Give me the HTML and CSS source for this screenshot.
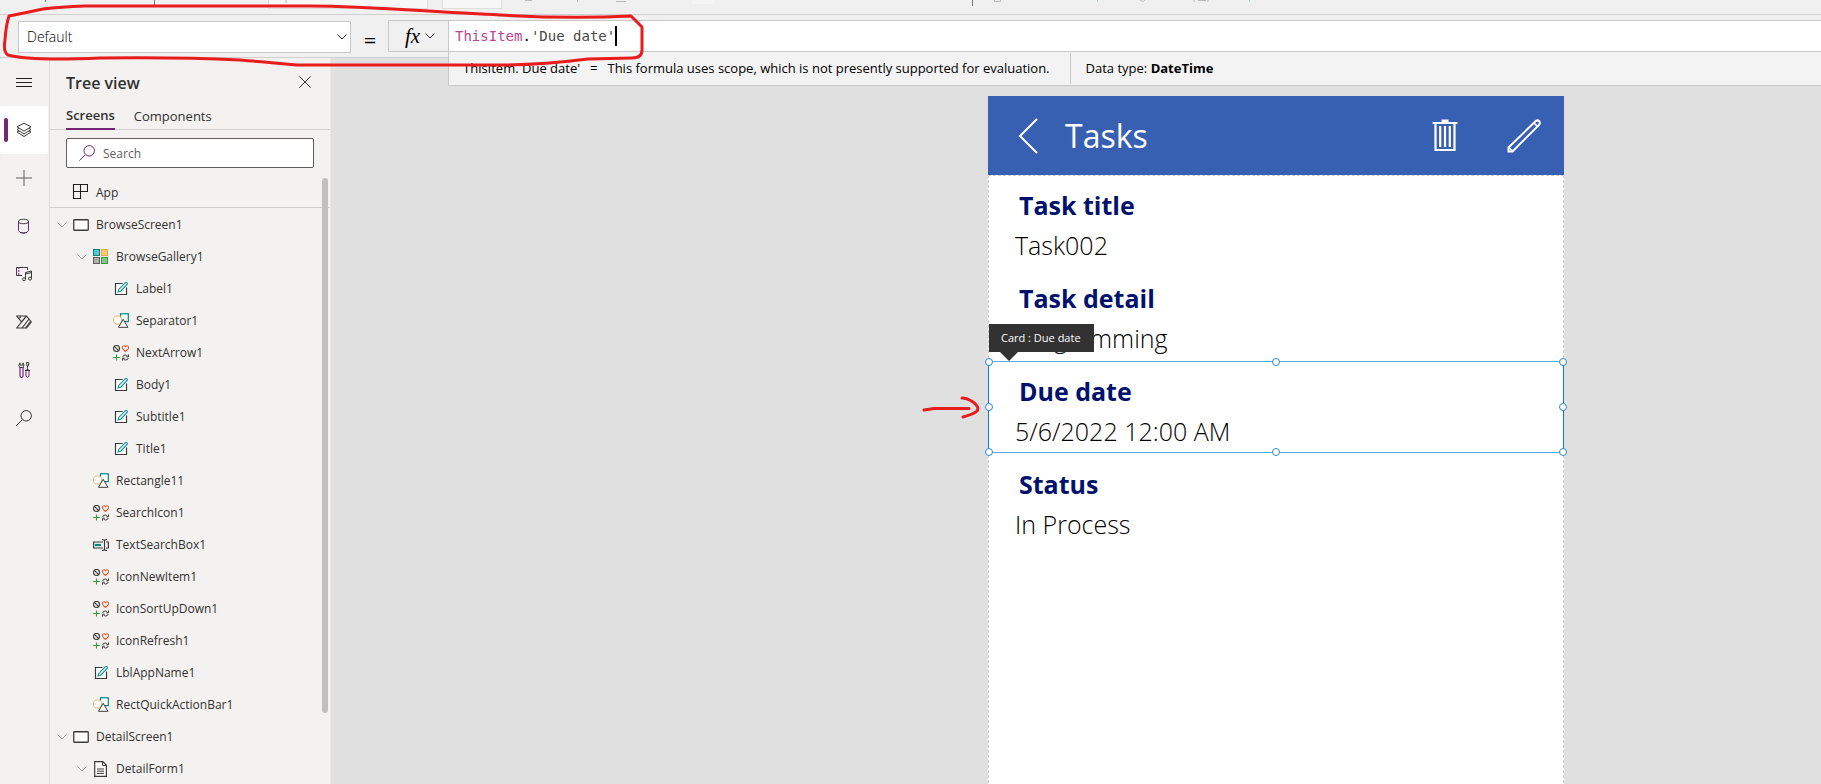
FILE: index.html
```html
<!DOCTYPE html>
<html lang="en">
<head>
<meta charset="utf-8">
<meta name="viewport" content="width=device-width, initial-scale=1">
<title>Tasks - App studio</title>
<link rel="stylesheet" href="styles.css">
</head>
<body>
<svg class="defs" width="0" height="0" aria-hidden="true">
  <defs>
    <symbol id="i-chev" viewBox="0 0 10 6"><path d="M.5 .5L5 5L9.500 .5" fill="none" stroke="currentColor"/></symbol>
    <symbol id="i-screen" viewBox="0 0 16 16"><rect x=".75" y="2.750" width="14.500" height="10.500" rx=".8" fill="#fff" stroke="#3b3a39" stroke-width="1.300"/></symbol>
    <symbol id="i-gallery" viewBox="0 0 16 16">
      <rect x=".5" y=".5" width="6" height="6" fill="#5cc5c5" stroke="#038387"/><rect x="8.500" y=".5" width="6" height="6" fill="#ffc978" stroke="#f2a93b"/>
      <rect x=".5" y="8.500" width="6" height="6" fill="#b1b0af" stroke="#5f5e5c"/><rect x="8.500" y="8.500" width="6" height="6" fill="#87c38a" stroke="#359b3a"/>
    </symbol>
    <symbol id="i-label" viewBox="0 0 16 16">
      <path d="M9.500 2.500H2.500V13.500H13.500V6.500" fill="#fff" stroke="#3b3a39" stroke-width="1.200"/>
      <path d="M5 11L5.800 8.200L12.400 1.600Q13.300 1 14.100 1.800Q14.800 2.700 14.200 3.500L7.700 10.200Z" fill="#d5eeee" stroke="#1e9799" stroke-width="1.100"/>
    </symbol>
    <symbol id="i-shape" viewBox="0 0 16 16">
      <rect x="7.500" y=".8" width="7.800" height="7.800" fill="#fff" stroke="#038387" stroke-width="1.200"/>
      <circle cx="4.600" cy="7" r="4.100" fill="#fff" stroke="#f4b85e"/>
      <path d="M10.200 6.300L14.900 14.300H5.500Z" fill="#fff" stroke="#3b3a39"/>
    </symbol>
    <symbol id="i-icons" viewBox="0 0 16 16" fill="none">
      <circle cx="3.500" cy="3.500" r="3" stroke="#3b3a39" stroke-width="1.100"/><path d="M1.400 1.400L5.600 5.600" stroke="#3b3a39" stroke-width="1.100"/>
      <path d="M12.500 6.500L9.800 3.800Q8.800 2.200 10 1.100Q11.500 .2 12.500 1.700Q13.500 .2 15 1.100Q16.200 2.200 15.200 3.800Z" stroke="#e8593a" stroke-width="1.100"/>
      <path d="M3.500 9.500V15.500M.2 12.500H6.800" stroke="#359b3a" stroke-width="1.200"/>
      <path d="M9.800 12Q10 10 12.300 10Q14 10 14.800 11.500M15.500 9.500V11.800H13.200M15.200 13Q14.900 15 12.700 15Q11 15 10.200 13.500M9.500 15.500V13.200H11.800" stroke="#3b3a39"/>
    </symbol>
    <symbol id="i-input" viewBox="0 0 16 16" fill="none">
      <path d="M10 5H.6V11H10M13 5H15.400V11H13" stroke="#3b3a39" stroke-width="1.200"/><path d="M2 8H8" stroke="#038387" stroke-width="2.200"/>
      <path d="M9 2.500Q11.500 2.500 11.500 4V12Q11.500 13.500 9 13.500M14 2.500Q11.500 2.500 11.500 4M14 13.500Q11.500 13.500 11.500 12" stroke="#3b3a39" stroke-width="1.100"/>
    </symbol>
    <symbol id="i-form" viewBox="0 0 16 16">
      <path d="M1.700 .6H9.800L13.400 4.200V15.400H1.700Z" fill="#fff" stroke="#3b3a39" stroke-width="1.200"/><path d="M9.500 .8V4.500H13.200M4 8H11M4 10.200H11M4 12.400H11" fill="none" stroke="#3b3a39"/>
    </symbol>
    <symbol id="i-app" viewBox="0 0 16 16"><path d="M1.500 .5H15.500V7.500H1.500ZM1.500 7.500V14.500H8.500V.5" fill="none" stroke="#201f1e" stroke-width="1.100"/></symbol>
    <symbol id="i-search" viewBox="0 0 16 16"><circle cx="10.200" cy="5.800" r="5.200" fill="none" stroke="currentColor"/><path d="M6.500 9.500L.4 15.600" stroke="currentColor"/></symbol>
  </defs>
</svg>

<div class="studio">
  <div class="ribbon" aria-hidden="true">
    <svg width="1300" height="14" viewBox="0 0 1300 14">
      <path d="M45.500 0V2" stroke="#359b4a"/><path d="M154.500 0V5M972.500 0V6" stroke="#777"/>
      <rect x="268.500" y="-4" width="159" height="12.500" fill="#f7f7f7" stroke="#ddd"/><rect x="442.500" y="-4" width="59" height="12.500" fill="#f7f7f7" stroke="#ddd"/>
      <rect x="692" y="0" width="22" height="4" fill="#f5f5f5"/>
      <path d="M286 0V3M525 .5H532M577.500 0V2M616 1.500H626M994.500 0V1.500H1000.500V0M1140 0Q1143 3 1145 0M1194 0V2M1198 .5H1206M1208 0V2" fill="none" stroke="#b8b8b8"/>
      <path d="M1097.500 0V2M1249.500 0V2" stroke="#b5d8cc"/>
    </svg>
  </div>

  <header class="formula-bar">
    <div class="property">
      <select class="property-select" aria-label="Property"><option>Default</option></select>
      <svg class="property-chev" width="10" height="6"><use href="#i-chev"/></svg>
    </div>
    <span class="equals">=</span>
    <button class="fx" type="button" aria-label="Insert function"><span class="fx-text">fx</span><svg width="10" height="6"><use href="#i-chev"/></svg></button>
    <div class="formula">
      <div class="formula-input" role="textbox" contenteditable="true" spellcheck="false" aria-label="Formula"><span class="token">ThisItem</span>.<span class="name">'Due date'</span><span class="caret"></span></div>
      <div class="result">
        <div class="result-text"><span>ThisItem. Due date'</span><span>=</span><span>This formula uses scope, which is not presently supported for evaluation.</span></div>
        <div class="result-type">Data type: <b>DateTime</b></div>
      </div>
    </div>
  </header>

  <div class="workspace">
    <nav class="rail" aria-label="Authoring">
      <button type="button" aria-label="Menu"><svg width="16" height="16" viewBox="0 0 16 16"><path d="M0 4.500H16M0 8.500H16M0 12.500H16" stroke="#201f1e"/></svg></button>
      <button type="button" class="active" aria-label="Tree view"><svg width="16" height="16" viewBox="0 0 16 16" fill="#fff" stroke="#3b3a39"><path d="M1 10L8 6.500L15 10L8 14.500Z"/><path d="M1 7.500L8 4L15 7.500L8 12Z"/><path d="M1 4.800L8 1.300L15 4.800L8 9.200Z"/></svg></button>
      <button type="button" aria-label="Insert"><svg width="16" height="16" viewBox="0 0 16 16"><path d="M0 8H16M8 0V16" stroke="#605e5c"/></svg></button>
      <button type="button" aria-label="Data"><svg width="16" height="16" viewBox="0 0 16 16" fill="none"><path d="M2.500 3.500V12.500Q3 15 7.500 15Q12 15 12.500 12.500V3.500" stroke="#742774"/><ellipse cx="7.500" cy="3.500" rx="5" ry="2.200" stroke="#3b3a39"/><path d="M4 14.500Q7.500 15.600 11 14.500" stroke="#3b3a39"/></svg></button>
      <button type="button" aria-label="Media"><svg width="16" height="16" viewBox="0 0 16 16" fill="none" stroke="#3b3a39"><path d="M6 9.500H.5V1.500H11.500V4"/><path d="M.5 1V10M2.800 1V10" stroke="#742774" stroke-dasharray="2 1"/><path d="M9.500 13V6.500L15.500 5V12.500M9.500 8L15.500 6.500"/><circle cx="8" cy="13.300" r="1.500"/><circle cx="14" cy="12.600" r="1.500"/></svg></button>
      <button type="button" aria-label="Power Automate"><svg width="16" height="16" viewBox="0 0 16 16" fill="none" stroke="#3b3a39" stroke-width="1.200"><path d="M.7 2H10.500L15.300 8L10.500 14H.7L5.500 8Z"/><path d="M5.500 8L10.500 2M6 14L13 5M9.500 14L14.700 7.300M3.500 4.500L5 2"/></svg></button>
      <button type="button" aria-label="Advanced tools"><svg width="16" height="16" viewBox="0 0 16 16" fill="none"><path d="M4 5V14Q5.500 17 7 14V5" stroke="#742774" stroke-width="1.200"/><path d="M4 .8Q1.500 4 4 5.500H7Q9 3 7 .8V3H4Z" stroke="#3b3a39"/><path d="M11.500 4V8M10 8H13V14Q11.500 17 10 14V8" stroke="#742774"/><path d="M10.500 .6H12.900L12.300 4H11ZM9 8.500H14" stroke="#3b3a39"/></svg></button>
      <button type="button" aria-label="Search"><svg class="rail-search" width="16" height="16"><use href="#i-search"/></svg></button>
    </nav>

    <aside class="tree">
      <div class="tree-head">
        <h1>Tree view</h1>
        <button type="button" aria-label="Close"><svg width="12" height="12" viewBox="0 0 12 12"><path d="M.3 .3L11.700 11.700M11.700 .3L.3 11.700" stroke="#323130"/></svg></button>
      </div>
      <div class="tabs" role="tablist">
        <button type="button" role="tab" aria-selected="true" class="tab selected">Screens</button>
        <button type="button" role="tab" aria-selected="false" class="tab">Components</button>
      </div>
      <label class="search"><svg width="16" height="16"><use href="#i-search"/></svg><input type="search" placeholder="Search" aria-label="Search"></label>
      <div class="tree-app"><svg width="16" height="16"><use href="#i-app"/></svg><span>App</span></div>
      <ul class="tree-list">
        <li class="l1"><svg class="chev" width="10" height="6"><use href="#i-chev"/></svg><svg width="16" height="16"><use href="#i-screen"/></svg><span>BrowseScreen1</span></li>
        <li class="l2"><svg class="chev" width="10" height="6"><use href="#i-chev"/></svg><svg width="16" height="16"><use href="#i-gallery"/></svg><span>BrowseGallery1</span></li>
        <li class="l3"><svg width="16" height="16"><use href="#i-label"/></svg><span>Label1</span></li>
        <li class="l3"><svg width="16" height="16"><use href="#i-shape"/></svg><span>Separator1</span></li>
        <li class="l3"><svg width="16" height="16"><use href="#i-icons"/></svg><span>NextArrow1</span></li>
        <li class="l3"><svg width="16" height="16"><use href="#i-label"/></svg><span>Body1</span></li>
        <li class="l3"><svg width="16" height="16"><use href="#i-label"/></svg><span>Subtitle1</span></li>
        <li class="l3"><svg width="16" height="16"><use href="#i-label"/></svg><span>Title1</span></li>
        <li class="l2 leaf"><svg width="16" height="16"><use href="#i-shape"/></svg><span>Rectangle11</span></li>
        <li class="l2 leaf"><svg width="16" height="16"><use href="#i-icons"/></svg><span>SearchIcon1</span></li>
        <li class="l2 leaf"><svg width="16" height="16"><use href="#i-input"/></svg><span>TextSearchBox1</span></li>
        <li class="l2 leaf"><svg width="16" height="16"><use href="#i-icons"/></svg><span>IconNewItem1</span></li>
        <li class="l2 leaf"><svg width="16" height="16"><use href="#i-icons"/></svg><span>IconSortUpDown1</span></li>
        <li class="l2 leaf"><svg width="16" height="16"><use href="#i-icons"/></svg><span>IconRefresh1</span></li>
        <li class="l2 leaf"><svg width="16" height="16"><use href="#i-label"/></svg><span>LblAppName1</span></li>
        <li class="l2 leaf"><svg width="16" height="16"><use href="#i-shape"/></svg><span>RectQuickActionBar1</span></li>
        <li class="l1"><svg class="chev" width="10" height="6"><use href="#i-chev"/></svg><svg width="16" height="16"><use href="#i-screen"/></svg><span>DetailScreen1</span></li>
        <li class="l2"><svg class="chev" width="10" height="6"><use href="#i-chev"/></svg><svg width="16" height="16"><use href="#i-form"/></svg><span>DetailForm1</span></li>
      </ul>
      <div class="scrollbar"></div>
    </aside>

    <main class="canvas">
      <section class="phone">
        <header class="app-bar">
          <button type="button" aria-label="Back"><svg width="20" height="36" viewBox="0 0 20 36"><path d="M19 1L2 18L19 35" fill="none" stroke="#fff" stroke-width="2"/></svg></button>
          <h2>Tasks</h2>
          <button type="button" aria-label="Delete"><svg width="26" height="34" viewBox="0 0 26 34" fill="none" stroke="#fff"><path d="M.5 4H25.500" stroke-width="2"/><path d="M9.500 2H16.500" stroke-width="3"/><path d="M3.500 4V31H22.500V4" stroke-width="2.200"/><path d="M8.200 7V28M13 7V28M17.800 7V28" stroke-width="2.200"/></svg></button>
          <button type="button" aria-label="Edit"><svg width="34" height="34" viewBox="0 0 34 34" fill="none" stroke="#fff" stroke-width="2"><path d="M1.500 32.500V28.500L28.500 2.300Q30.500 .5 32.300 2.200Q33.700 4.200 31.700 6.200L5.500 32.500Z"/><path d="M27 4L30.500 7.500M2 28.500L5.500 32" stroke-width="1.500"/></svg></button>
        </header>
        <div class="form">
          <article class="card"><h3>Task title</h3><p>Task002</p></article>
          <article class="card"><h3>Task detail</h3><p>Programming</p></article>
          <article class="card chosen">
            <h3>Due date</h3><p>5/6/2022 12:00 AM</p>
            <div class="selection"><i></i><i></i><i></i><i></i><i></i><i></i><i></i><i></i></div>
            <div class="tip">Card : Due date</div>
            <svg class="arrow" width="60" height="24" viewBox="0 0 60 24" fill="none" stroke="#e81c1c" stroke-width="3" stroke-linecap="round" stroke-linejoin="round"><path d="M4 14L14 12.500H49M42 2Q47 2 53 6Q60 11 57 15Q54 18 43 21"/></svg>
          </article>
          <article class="card"><h3>Status</h3><p>In Process</p></article>
        </div>
      </section>
    </main>
  </div>
  <svg class="outline" width="660" height="80" viewBox="0 0 660 80" fill="none" stroke="#e81c1c" stroke-width="3" stroke-linejoin="round" aria-hidden="true"><path d="M9 16L24 13L43 9Q60 7 85 6H310C370 6 430 12 500 15Q570 19 631 16L642 27V50Q642 58 632 58L588 59Q540 65 500 65H297Q265 62 240 60Q180 57 100 58Q30 61 8 55Q3 52 5 40Q6 25 9 16Z"/></svg>
</div>
</body>
</html>
```

FILE: styles.css
```css
* { box-sizing: border-box; }
body {
  margin: 0;
  overflow: hidden;
  background: #f0f0f0;
  color: #323130;
  font: 12px/16px "Open Sans", "Noto Sans", sans-serif;
}
h1, h2, h3, p, ul { margin: 0; padding: 0; }
ul { list-style: none; }
button { padding: 0; border: 0; background: none; color: inherit; font: inherit; }
svg { display: block; flex: none; }
.defs { position: absolute; }

.studio { position: relative; display: flex; flex-direction: column; height: 100vh; overflow: hidden; }
.ribbon { flex: none; height: 15px; overflow: hidden; border-bottom: 1px solid #d0d0d0; }

/* formula bar */
.formula-bar {
  position: relative;
  z-index: 2;
  display: flex;
  flex: none;
  height: 43px;
  padding: 5px 0 0 18px;
  border-bottom: 1px solid #d0d0d0;
}
.property { position: relative; width: 333px; margin-top: 1px; }
.property-select {
  display: block;
  width: 100%;
  height: 32px;
  padding: 0 8px;
  border: 1px solid #c8c8c8;
  border-radius: 0;
  background: #fff;
  color: #000;
  font: 300 14px/30px "Open Sans", sans-serif;
  appearance: none;
}
.property-chev { position: absolute; right: 4px; top: 13px; pointer-events: none; }
.equals { width: 37px; padding-left: 1px; color: #000; font: 22px/38px "Open Sans", sans-serif; text-align: center; }
.fx {
  display: flex;
  align-items: center;
  gap: 5px;
  width: 60px;
  height: 32px;
  padding-left: 16px;
  border: 1px solid #c8c8c8;
  border-right: 0;
}
.fx-text { color: #000; font: italic 21px/28px "Liberation Serif", serif; }
.formula { flex: 1; min-width: 0; }
.formula-input {
  display: flex;
  align-items: center;
  height: 32px;
  padding-left: 6px;
  border: 1px solid #c8c8c8;
  border-right: 0;
  background: #fff;
  color: #000;
  font: 14px/20px "DejaVu Sans Mono", monospace;
  white-space: pre;
}
.token { color: #b8478f; }
.name { color: #484848; }
.caret { width: 2px; height: 20px; background: #000; }
.result {
  display: flex;
  height: 34px;
  border: 1px solid #c8c8c8;
  border-width: 0 0 1px 1px;
  background: #f3f3f3;
  color: #000;
  font-size: 13px;
  line-height: 30px;
  white-space: nowrap;
}
.result-text { display: flex; gap: 10px; margin: 1px 0; padding: 0 20px 0 14px; border-right: 1px solid #c8c8c8; }
.result-type { padding: 1px 15px; }

/* left rail */
.workspace { display: flex; flex: 1; min-height: 0; }
.rail { flex: none; width: 50px; border-right: 1px solid #dcdbda; background: #f3f2f1; }
.rail button { position: relative; display: flex; align-items: center; justify-content: center; width: 48px; height: 48px; }
.rail .active { border-radius: 2px; background: #fff; }
.rail .active::before { content: ""; position: absolute; left: 4px; top: 12px; width: 4px; height: 24px; border-radius: 2px; background: #742774; }

/* tree view */
.tree { position: relative; flex: none; width: 281px; overflow: hidden; border-right: 1px solid #e8e8e8; background: #f3f2f1; }
.tree-head { display: flex; align-items: center; justify-content: space-between; height: 48px; padding: 0 19px 0 16px; }
.tree-head h1 { padding-top: 2px; font-size: 16px; font-weight: 600; line-height: 24px; }
.tabs { display: flex; gap: 19px; height: 24px; padding-left: 16px; border-bottom: 1px solid #d0d0d0; }
.tab { height: 24px; padding-bottom: 4px; font-size: 13px; line-height: 18px; }
.tab.selected { border-bottom: 2px solid #742774; font-weight: 600; }
.search { display: flex; align-items: center; gap: 8px; height: 30px; margin: 8px 16px; padding-left: 12px; border: 1px solid #605e5c; border-radius: 2px; background: #fff; color: #742774; }
.search input { flex: 1; min-width: 0; padding: 2px 0 0; border: 0; outline: 0; background: none; font: inherit; }
.search input::placeholder { color: #605e5c; opacity: 1; }
.tree-app { display: flex; align-items: center; gap: 8px; height: 32px; padding-left: 22px; border-bottom: 1px solid #d0d0d0; }
.tree-app span { padding-top: 2px; }
.tree-list { padding-top: 1px; }
.tree-list li { display: flex; align-items: center; gap: 7px; height: 32px; white-space: nowrap; }
.tree-list .l1 { padding-left: 7px; }
.tree-list .l2 { padding-left: 27px; }
.tree-list .l3 { padding-left: 63px; }
.tree-list .leaf { padding-left: 43px; }
.chev { color: #a19f9d; margin-right: -1px; }
.scrollbar { position: absolute; right: 2px; top: 120px; width: 6px; height: 535px; border-radius: 3px; background: #c1c0bf; }

/* canvas */
.canvas { display: flex; flex: 1; justify-content: center; min-width: 0; padding: 38px 0 0 400px; background: #e0e0e0; }
.phone { display: flex; flex: 0 1 576px; flex-direction: column; font-family: "Open Sans", sans-serif; }
.app-bar { display: flex; align-items: center; height: 79px; padding: 0 23px 0 30px; background: #3860b2; color: #fff; }
.app-bar h2 { flex: 1; padding-left: 27px; font-size: 32px; font-weight: 400; line-height: 44px; }
.app-bar button + button { margin-left: 49px; }
.form { flex: 1; margin-bottom: -4px; outline: 1px dashed #d0d0d0; outline-offset: -1px; background: #fff; }
.card { position: relative; height: 93px; padding: 12px 0 0 27px; color: #000; }
.card h3 { padding-left: 4px; color: #00126b; font-size: 25px; font-weight: 700; line-height: 36px; }
.card p { padding-top: 4px; font-size: 25px; font-weight: 300; line-height: 36px; }
.selection { position: absolute; inset: 0 0 1px; border: 1px solid #0f78c8; border-color: #5aa9e6 #0f78c8; }
.selection i { position: absolute; width: 8px; height: 8px; margin: -4px; border: 1px solid #2b88d8; border-radius: 50%; background: #fff; }
.selection i:nth-child(1), .selection i:nth-child(4), .selection i:nth-child(6) { left: 0; }
.selection i:nth-child(2), .selection i:nth-child(7) { left: 50%; }
.selection i:nth-child(3), .selection i:nth-child(5), .selection i:nth-child(8) { left: 100%; }
.selection i:nth-child(-n+3) { top: 0; }
.selection i:nth-child(4), .selection i:nth-child(5) { top: 50%; }
.selection i:nth-child(n+6) { top: 100%; }
.tip { position: absolute; left: 1px; bottom: 102px; padding: 6px 13px 6px 12px; background: #323232; color: #fff; font-size: 11px; line-height: 16px; white-space: nowrap; }
.tip::after { content: ""; position: absolute; left: 11px; top: 100%; border: 9px solid transparent; border-bottom: 0; border-top-color: #323232; }
.arrow { position: absolute; left: -68px; top: 35px; }
.outline { position: absolute; left: 0; top: 0; z-index: 3; pointer-events: none; }
```
